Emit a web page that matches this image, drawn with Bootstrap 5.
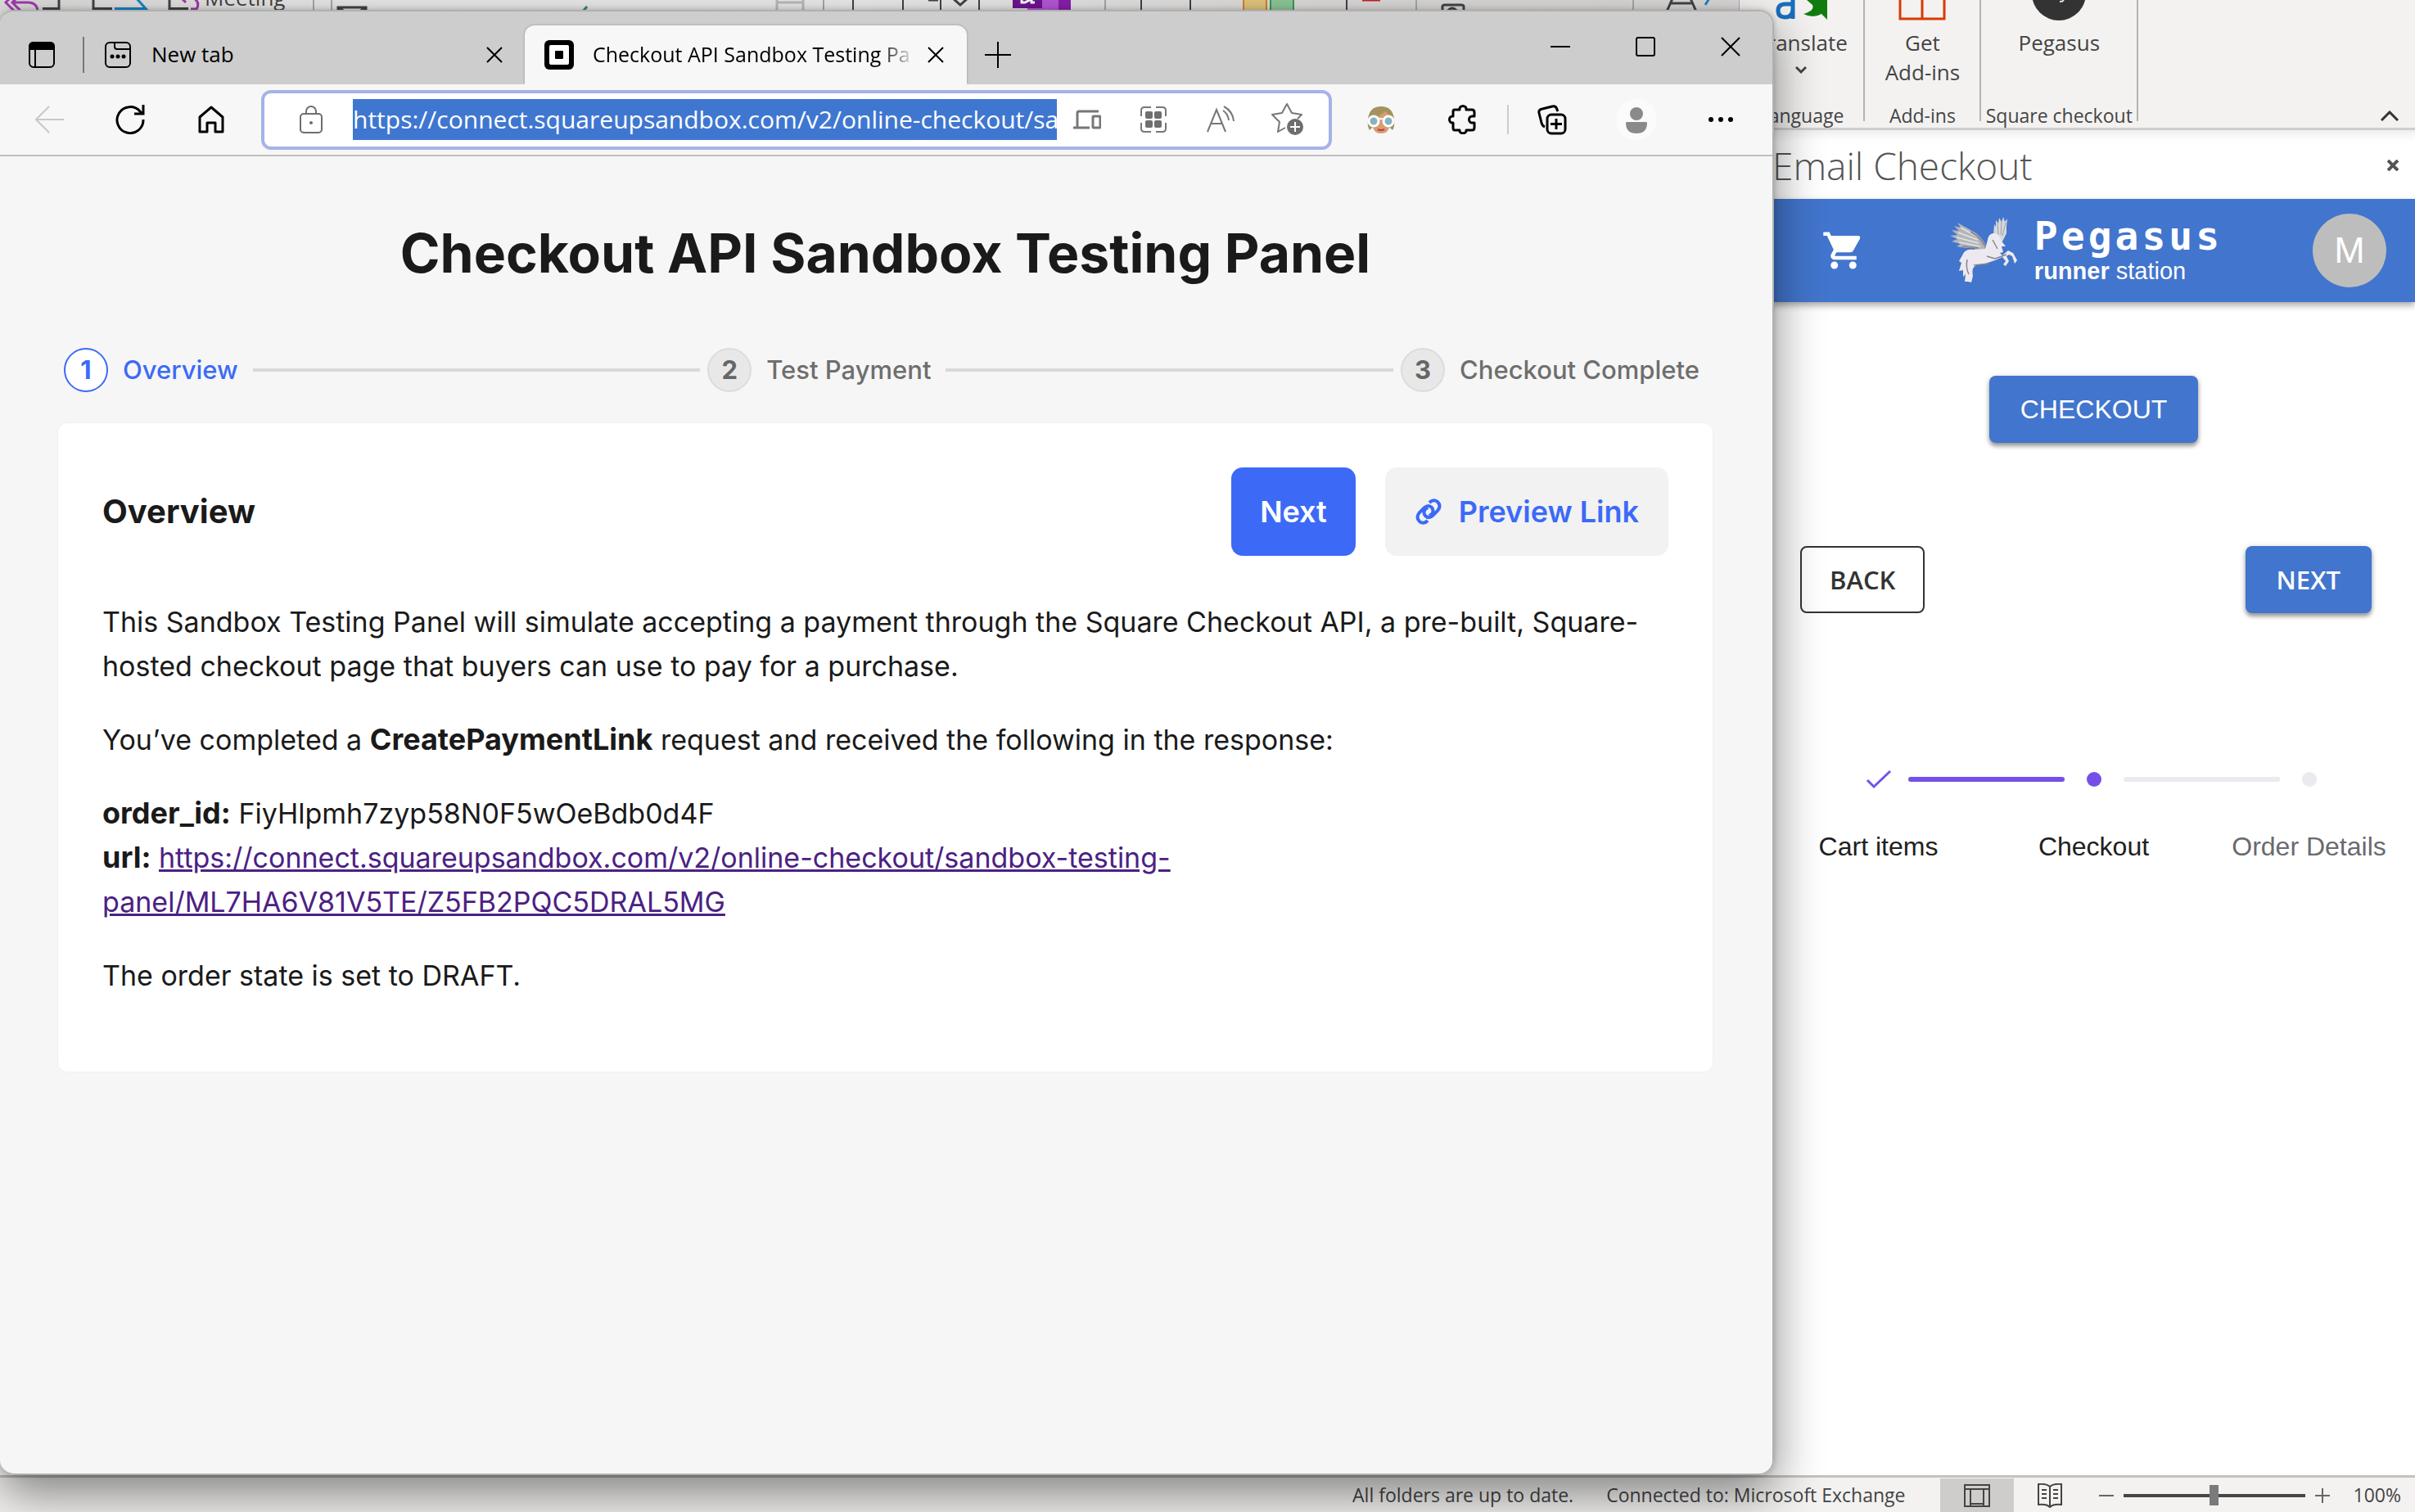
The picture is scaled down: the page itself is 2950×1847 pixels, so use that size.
<!DOCTYPE html>
<html lang="en">
<head>
<meta charset="utf-8">
<meta name="viewport" content="width=device-width, initial-scale=1">
<title>Checkout API Sandbox Testing Panel</title>
<link href="https://cdn.jsdelivr.net/npm/bootstrap@5.3.0/dist/css/bootstrap.min.css" rel="stylesheet">
<style>
  :root { --ui: "Open Sans", "Noto Sans", sans-serif; --arial: "Liberation Sans", Arial, sans-serif; --market: Inter, sans-serif; --pane: 785px; --edge-right: 783px; }
  body { font-family: var(--ui); color: #444; background: #fff; }
  button { padding: 0; border: 0; background: none; color: inherit; }
  svg { display: block; flex: none; }
  .desktop { min-height: 100vh; }

  /* Outlook behind the browser */
  .ribbon { height: 159px; background: #f3f2f1; border-bottom: 3px solid #d0cecc; font-size: 26px; line-height: 36px; }
  .ribbon-left { background: linear-gradient(90deg, #dedddb, #ececec 20%, #eeeeee 50%, #dedcda 80%, #dddbd9); height: 40px; }
  .ribbon-group { height: 148px; border-right: 2px solid #b5b3b1; width: 142px; }
  .ribbon-group.lang { width: 154px; }
  .ribbon-group.square { width: 192px; }
  .ribbon-group .tool { line-height: 36px; padding-top: 34px; position: relative; }
  .tool .glyph { position: absolute; top: 0; left: 50%; transform: translateX(-50%); }
  .tool .caret { margin: 10px auto 0; }
  .ribbon-group .caption { font-size: 23px; line-height: 14px; white-space: nowrap; }
  .ribbon-end { width: 338px; padding: 0 20px 8px 0; }
  .task-pane { width: var(--pane); background: #fff; }
  .pane-title { height: 84px; background: linear-gradient(#efefef, #fff 14px); padding-top: 2px; }
  .pane-title h2 { font: 300 46px/60px var(--ui); color: #555; }
  .app-bar { height: 126px; background: #4275cd; color: #fff; box-shadow: 0 4px 8px rgba(0,0,0,.35); font-family: var(--arial); padding: 0 35px 0 60px; }
  .brand { gap: 18px; padding-right: 8px; }
  .brand-name { font: 700 48px/50px "DejaVu Sans Mono", monospace; letter-spacing: 4px; }
  .brand-sub { font-size: 29px; line-height: 36px; }
  .user-badge { width: 90px; height: 90px; background: #bdbdbd; font-size: 45px; }
  .mui { height: 82px; padding: 0 38px; border-radius: 8px; font: 600 31px/42px var(--ui); background: #4275cd; color: #fff; box-shadow: 0 4px 5px rgba(0,0,0,.35), 0 1px 8px rgba(0,0,0,.15); }
  .mui.arial { font: 400 32px/42px var(--arial); }
  .mui.outline { background: transparent; color: #333; border: 2px solid #333; box-shadow: none; padding: 0 34px; }
  .pay { padding-top: 90px; }
  .pager { padding: 126px 53px 0 34px; }
  .progress-row { padding-top: 191px; }
  .stage { width: 263px; flex: none; gap: 50px; font: 32px/40px var(--arial); color: #202020; }
  .stage svg { height: 24px; }
  .stage.pending { color: #6a6a70; }
  .bar { position: absolute; top: 9px; height: 6px; width: 191px; border-radius: 3px; left: 168px; background: #7450e8; }
  .bar.off { background: #eaeaef; }
  .statusbar { height: 45px; background: #f3f2f1; border-top: 3px solid #c4c2c0; font-size: 23px; padding-top: 1px; }
  .view-on { width: 90px; background: #cfcdcc; }
  .zoom-range { -webkit-appearance: none; appearance: none; width: 222px; height: 26px; margin: 0 12px; background: linear-gradient(#484644,#484644) center/100% 4px no-repeat; }
  .zoom-range::-webkit-slider-thumb { -webkit-appearance: none; width: 11px; height: 25px; background: #7a7a7a; }

  /* browser window */
  .edge { position: absolute; left: 0; top: 12px; right: var(--edge-right); bottom: 45px; border: 2px solid #b0b0b0; border-left: 0; border-radius: 18px; overflow: hidden; background: #f6f6f6; color: #000; }
  .edge-shadow { position: absolute; left: 0; top: 12px; right: var(--edge-right); bottom: 45px; border-radius: 18px; box-shadow: 0 22px 60px rgba(0,0,0,.48), 0 0 6px rgba(0,0,0,.2); }
  .tabstrip { height: 89px; background: #cdcdcd; font-size: 26px; padding: 16px 0 0 35px; }
  .tab-sep { width: 2px; height: 44px; background: #777; margin: 0 25px 0 34px; }
  .tab-off { width: 513px; padding-right: 27px; gap: 25px; }
  .tab-on { width: 540px; height: 72px; background: #f7f7f7; border-radius: 12px 12px 0 0; padding: 0 28px 0 24px; gap: 23px; box-shadow: 0 0 3px rgba(0,0,0,.3); clip-path: inset(-3px -3px 0 -3px); }
  .tab-title { font-size: 25px; width: 391px; overflow: hidden; white-space: nowrap; -webkit-mask: linear-gradient(90deg, #000 350px, transparent 394px); mask: linear-gradient(90deg, #000 350px, transparent 394px); }
  .win-buttons { gap: 80px; padding-right: 39px; margin-top: -19px; }
  .toolbar { height: 88px; background: #f7f7f7; border-bottom: 2px solid #bfbfbf; padding-left: 42px; }
  .omnibox { width: 1308px; height: 73px; border: 4px solid #a4b3e8; border-radius: 12px; background: #fff; color: #6e6e6e; padding: 0 30px 0 43px; }
  .url { width: 860px; height: 50px; border: 0; border-radius: 0; padding: 0; margin: 0 20px 0 37px; background: #3f77d0; color: #fff; font: 30px/50px var(--ui); outline: 0; }
  .tool-sep { width: 2px; height: 36px; background: #ccc; }
  .page { padding: 0 72px 0 70px; font-family: var(--market); color: #1a1a1a; }
  .page h1 { font-size: 66px; line-height: 90px; font-weight: 700; margin: 73px 0 71px; }
  .steps { font-size: 31px; font-weight: 500; color: #6e6e6e; padding: 0 17px 0 8px; }
  .steps .one { gap: 18px; }
  .num { width: 54px; height: 54px; border: 2px solid #dcdcdc; background: #e8e8e8; border-radius: 50%; font-weight: 700; color: #666; }
  .now .num { border-color: #3c6af7; background: #fff; color: #3c6af7; }
  .now { color: #3c6af7; }
  .rule { height: 4px; background: #d6d9dc; margin: 0 9px 0 18px; }
  .panel { margin-top: 37px; background: #fff; border: 1px solid #f1f1f1; border-radius: 12px; padding: 54px 54px 90px; font-size: 34px; line-height: 54px; }
  .panel h2 { font-size: 40px; font-weight: 700; }
  .panel-head { margin-bottom: 54px; }
  .panel p { margin: 0 0 36px; }
  .panel p b { font-size: 36px; line-height: 40px; }
  .panel p a { color: #4b2183; }
  .sq { height: 108px; border-radius: 14px; padding: 0 36px; font-size: 36px; font-weight: 600; background: #f2f2f2; color: #3c6af7; gap: 20px; }
  .sq.main { background: #3c6af7; color: #fff; margin-right: 36px; padding: 0 35px; }
</style>
<script src="https://cdn.jsdelivr.net/npm/bootstrap@5.3.0/dist/js/bootstrap.bundle.min.js"></script>
</head>
<body>
<div class="desktop position-relative d-flex flex-column overflow-hidden">

  <header class="ribbon d-flex">
    <div class="ribbon-left flex-grow-1 overflow-hidden">
      <svg width="2126" height="40" fill="none" stroke="#444" stroke-width="3">
        <path d="M18-8 7 3l11 11M26-8 15 3l11 11M16 3h18q12 0 12 12" stroke="#a03cb0"/>
        <path d="M52 10.500h20V-5M114-5v15.500h23M207-5v15.500h23"/>
        <path d="M140 10.500h38L164-5" stroke="#1a86c8"/>
        <path d="M222-2l5 5M236-3q9 6 4 14h-7" stroke="#a03cb0"/>
        <path d="M383 0v14M405 0v14M1006 0v14M1350 0v14M1730 0v14M1995 0v14M2125 0v14" stroke="#aaa" stroke-width="2"/>
        <path d="M413 14V9h34v5M413 9l8 5M447 9l-8 5"/>
        <path d="M712 14l5-6" stroke="#2f8f4f"/>
        <path d="M949 0v14M981 0v14M949 3h32" stroke="#bdbdbd"/>
        <path d="M1042 0v14M1103 0v14M1149 0v14M1196 0v14M1394 0v14M1454 0v14M1645 0v14" stroke-width="2"/>
        <path d="M1134 0h12M1164-2l9 8 9-8"/>
        <path d="M1255 0h38v14h-38z" fill="#b858d8" stroke="none"/><path d="M1293 0h15v14h-15z" fill="#8a1fb0" stroke="none"/>
        <path d="M1237 0h36v10h-36z" fill="#6f1494" stroke="none"/><path d="M1248 0v3h4l8-4v4h4" stroke="#fff"/>
        <path d="M1519-2h28v18h-28z" fill="#e4c87e" stroke="#d9822b" stroke-width="2"/><path d="M1552-2h28v18h-28z" fill="#8fca9a" stroke="#3a9a56" stroke-width="2"/>
        <path d="M1664 0h22" stroke="#c62020"/>
        <path d="M1762 14V8q0-2 3-2h20q3 0 3 2v6M1768 14q6-8 12 0M2036 14l8-18M2072 14l-8-18M2040 4h28"/>
        <path d="M2088-2l-5 8" stroke="#1a86c8"/>
        <text x="250" y="7" font-size="26" fill="#444" stroke="none">Meeting</text>
      </svg>
    </div>
    <div class="ribbon-group lang d-flex flex-column justify-content-between align-items-center">
      <button class="tool"><svg class="glyph" width="80" height="26"><path d="M30 0v23M30 10q0 11-9 11t-9-8 9-8h9" fill="none" stroke="#1a6fc0" stroke-width="5"/><path d="M47 0h25v24l-7-7q-10 6-22 0 14-4 11-11z" fill="#107c10"/></svg>Translate<svg class="caret" width="14" height="12" fill="none" stroke="#444" stroke-width="3"><path d="M1 2l6 6 6-6"/></svg></button>
      <span class="caption">Language</span>
    </div>
    <div class="ribbon-group d-flex flex-column justify-content-between align-items-center">
      <button class="tool"><svg class="glyph" width="58" height="26" fill="none" stroke="#d83b01" stroke-width="3"><path d="M2-2v25h54V-2M29-2v25"/></svg>Get<br>Add-ins</button>
      <span class="caption">Add-ins</span>
    </div>
    <div class="ribbon-group square d-flex flex-column justify-content-between align-items-center">
      <button class="tool"><svg class="glyph" width="70" height="26"><circle cx="35" cy="-8" r="33" fill="#333"/><path d="M36 2q6 0 4-4" fill="none" stroke="#ddd" stroke-width="2"/></svg>Pegasus</button>
      <span class="caption">Square checkout</span>
    </div>
    <div class="ribbon-end d-flex justify-content-end align-items-end"><button aria-label="Collapse ribbon"><svg width="22" height="13" fill="none" stroke="#333" stroke-width="3"><path d="M1 12 11 2l10 10"/></svg></button></div>
  </header>

  <main class="flex-grow-1 d-flex justify-content-end bg-white">
    <section class="task-pane">
      <div class="pane-title d-flex justify-content-between align-items-center">
        <h2 class="m-0">Email Checkout</h2>
        <button class="me-3 pe-1" aria-label="Close pane"><svg width="14" height="14" stroke="#555" stroke-width="4"><path d="M1 1l12 12M13 1 1 13"/></svg></button>
      </div>
      <div class="app-bar d-flex align-items-center justify-content-between position-relative">
        <button aria-label="Cart"><svg width="54" height="54" viewBox="0 0 24 24" fill="#fff"><path d="M7 18c-1.100 0-2 .9-2 2s.9 2 2 2 2-.9 2-2-.9-2-2-2zM1 2v2h2l3.600 7.600-1.350 2.450C4.500 15.400 5.500 17 7 17h12v-2H7.400l-.2-.25L8.100 13h7.450c.75 0 1.400-.4 1.750-1L20.900 5.500C21.250 4.800 20.750 4 20 4H5.200l-.9-2zm16 16c-1.100 0-2 .9-2 2s.9 2 2 2 2-.9 2-2-.9-2-2-2z"/></svg></button>
        <div class="brand d-flex align-items-center">
          <svg width="86" height="82" viewBox="0 0 86 82">
            <path d="M47 44C46 32 37 21 28 17L10 7l4 6-8-2 6 6-9-1 7 6-9 1 9 4-7 3 11 3-5 3 11 2 12 0-3 4 8 0-1 3z" fill="#b4b6ba"/>
            <path d="M14 13l20 11M11 19l24 9M9 25l27 7M12 31l26 5" stroke="#e4e5e8" stroke-width="1.500"/>
            <path d="M26 18q16 8 21 26M16 36l20 2" stroke="#8b8d92" stroke-width="2" fill="none"/>
            <path d="M54 24 55 9l2 3 0-8 3 4 1-7 3 5 2-6 2 6 3-4-1 9 0 9-5 10-8 4z" fill="#d7d8dc"/>
            <path d="M59 8l1 14M64 5l-1 17M69 7l-4 16" stroke="#9fa1a6"/>
            <path d="M47 28c1-8 8-10 13-6l5 9 4 5-5 0 2 7-4 1 3 3 7-6 6 3 5 9-3 4-3-9-4-2-3 2 3 6-4 6-3-2 3-4-4-5-9 4-12 4-11 2c-5 3-5 7-4 13l-2 8-4-1-4 0 1-9-3 3 0-8-5 1 3-10-3-2 4-7c3-7 8-8 15-7l13-1z" fill="#eceaf0"/>
            <path d="M53 28l6 11M46 48l10 3 14-5M30 59l18-2M22 52q-2 10 2 18" stroke="#8b8389" stroke-width="1.500" fill="none"/>
          </svg>
          <div class="d-flex flex-column">
            <span class="brand-name">Pegasus</span>
            <span class="brand-sub"><b>runner</b> station</span>
          </div>
        </div>
        <div class="user-badge rounded-circle d-flex align-items-center justify-content-center">M</div>
      </div>
      <div class="pay d-flex justify-content-center"><button class="mui arial">CHECKOUT</button></div>
      <div class="pager d-flex justify-content-between"><button class="mui outline">BACK</button><button class="mui">NEXT</button></div>
      <div class="progress-row d-flex justify-content-center text-center">
        <div class="stage position-relative d-flex flex-column align-items-center"><svg width="32" fill="none" stroke="#7450e8" stroke-width="3"><path d="M2 13l8 8L30 2"/></svg><span>Cart items</span><i class="bar"></i></div>
        <div class="stage position-relative d-flex flex-column align-items-center"><svg width="24"><circle cx="12" cy="12" r="9" fill="#7450e8"/></svg><span>Checkout</span><i class="bar off"></i></div>
        <div class="stage pending d-flex flex-column align-items-center"><svg width="24"><circle cx="12" cy="12" r="9" fill="#eaeaef"/></svg><span>Order Details</span></div>
      </div>
    </section>
  </main>

  <footer class="statusbar d-flex justify-content-end align-items-stretch">
    <span class="align-self-center" style="margin-right:40px">All folders are up to date.</span>
    <span class="align-self-center" style="margin-right:42px">Connected to: Microsoft Exchange</span>
    <button class="view-on d-flex align-items-center justify-content-center" aria-label="Normal view"><svg width="32" height="28" fill="none" stroke="#444" stroke-width="2"><path d="M1 1h30v26H1zM1 6h30M8 6v21M24 6v21M8 24h16"/></svg></button>
    <button class="align-self-center" style="margin:0 45px 0 29px" aria-label="Reading view"><svg width="30" height="30" fill="none" stroke="#444" stroke-width="2"><path d="M15 4Q11 0 1 1v25q10-1 14 3 4-4 14-3V1Q19 0 15 4zv24M5 8h6M5 13h6M5 18h6M19 8h6M19 13h6M19 18h6"/></svg></button>
    <button aria-label="Zoom out"><svg width="18" height="18" stroke="#666" stroke-width="2"><path d="M0 9h18"/></svg></button>
    <input class="zoom-range align-self-center" type="range" min="0" max="100" value="50" aria-label="Zoom">
    <button aria-label="Zoom in"><svg width="18" height="18" stroke="#666" stroke-width="2"><path d="M0 9h18M9 0v18"/></svg></button>
    <span class="align-self-center" style="margin:0 17px 0 29px">100%</span>
  </footer>

  <div class="edge-shadow"></div>
  <section class="edge d-flex flex-column">
    <div class="tabstrip d-flex align-items-center">
      <button aria-label="Tab actions"><svg width="32" height="32" fill="none" stroke="#000" stroke-width="2"><rect x="1" y="1" width="30" height="30" rx="5"/><path d="M1 9V6q0-5 5-5h20q5 0 5 5v3z" fill="#000"/><path d="M8 9v22"/></svg></button>
      <span class="tab-sep"></span>
      <div class="tab-off d-flex align-items-center">
        <svg width="32" height="32" fill="none" stroke="#000" stroke-width="2"><rect x="1" y="1" width="30" height="30" rx="5"/><path d="M12 1v5q0 3 3 3h16"/><g fill="#000" stroke="none"><circle cx="9" cy="18" r="2.500"/><circle cx="16" cy="18" r="2.500"/><circle cx="23" cy="18" r="2.500"/></g></svg>
        <span>New tab</span>
        <button class="ms-auto" aria-label="Close tab"><svg width="20" height="20" stroke="#000" stroke-width="2"><path d="M1 1l18 18M19 1 1 19"/></svg></button>
      </div>
      <div class="tab-on d-flex align-items-center align-self-end">
        <svg width="36" height="36"><rect width="36" height="36" rx="6"/><rect x="6" y="6" width="24" height="24" rx="2" fill="#fff"/><rect x="13" y="13" width="10" height="10" rx="1"/></svg>
        <span class="tab-title">Checkout API Sandbox Testing Panel</span>
        <button class="ms-auto" aria-label="Close tab"><svg width="20" height="20" stroke="#000" stroke-width="2"><path d="M1 1l18 18M19 1 1 19"/></svg></button>
      </div>
      <button style="margin-left:22px" aria-label="New tab"><svg width="32" height="32" stroke="#000" stroke-width="2"><path d="M0 16h32M16 0v32"/></svg></button>
      <div class="win-buttons d-flex align-items-center ms-auto">
        <button aria-label="Minimize"><svg width="24" height="24" stroke="#000" stroke-width="2"><path d="M0 12h24"/></svg></button>
        <button aria-label="Maximize"><svg width="24" height="24" fill="none" stroke="#000" stroke-width="2"><rect x="1" y="1" width="22" height="22" rx="2"/></svg></button>
        <button aria-label="Close"><svg width="24" height="24" stroke="#000" stroke-width="2"><path d="M1 1l22 22M23 1 1 23"/></svg></button>
      </div>
    </div>

    <div class="toolbar d-flex align-items-center">
      <button aria-label="Back" style="margin-right:62px"><svg width="37" height="34" fill="none" stroke="#c8c8c8" stroke-width="2"><path d="M36 17H2M18 1 2 17l16 16"/></svg></button>
      <button aria-label="Refresh" style="margin-right:65px"><svg width="36" height="36" fill="none" stroke="#000" stroke-width="3"><path d="M34 18A16 16 0 1 1 30 8l3 3M34 0v11H23"/></svg></button>
      <button aria-label="Home" style="margin-right:45px"><svg width="32" height="34" fill="none" stroke="#000" stroke-width="3" stroke-linejoin="round"><path d="M2 14 16 2l14 12v18h-9V21H11v11H2z"/></svg></button>
      <div class="omnibox d-flex align-items-center">
        <svg width="28" height="34" fill="none" stroke="#6e6e6e" stroke-width="2"><rect x="1" y="10" width="26" height="23" rx="4"/><path d="M8 10V7a6 6 0 0 1 12 0v3"/><circle cx="14" cy="21" r="2" fill="#6e6e6e" stroke="none"/></svg>
        <input class="url" type="text" aria-label="Address" value="https://connect.squareupsandbox.com/v2/online-checkout/sandbox-testing-panel/ML7HA6V81V5TE/Z5FB2PQC5DRAL5MG">
        <button style="margin-right:48px" aria-label="Send to devices"><svg width="34" height="24" fill="none" stroke="#777" stroke-width="3"><path d="M5 21V4q0-2 2-2h24M0 22h20"/><rect x="24" y="8" width="9" height="14" rx="1"/></svg></button>
        <button style="margin-right:49px" aria-label="Apps"><svg width="32" height="32" fill="none" stroke="#777" stroke-width="2"><path d="M1 12V5q0-4 4-4h8M19 1h8q4 0 4 4v7M31 20v7q0 4-4 4h-8M13 31H5q-4 0-4-4v-7"/><g fill="#6e6e6e" stroke="none"><rect x="6" y="6" width="9" height="9" rx="2"/><rect x="17" y="6" width="9" height="9" rx="2"/><rect x="6" y="17" width="9" height="9" rx="2"/><rect x="17" y="17" width="9" height="9" rx="2"/></g></svg></button>
        <button style="margin-right:44px" aria-label="Read aloud"><svg width="35" height="34" fill="none" stroke="#777" stroke-width="2"><path d="M1 32 12 5l11 27M5 22h14M20 6q6 4 7 12M21 1q11 6 12 18"/></svg></button>
        <button aria-label="Add to favorites"><svg width="40" height="40" fill="none" stroke="#777" stroke-width="2" stroke-linejoin="round"><path d="M17 30 8 35l2-12L1 14l12-2 6-11 6 11 12 2-5 5"/><circle cx="29" cy="29" r="10" fill="#6e6e6e" stroke="none"/><path d="M29 23v12M23 29h12" stroke="#fff"/></svg></button>
      </div>
      <button style="margin:0 64px 0 42px" aria-label="Extension"><svg width="36" height="35"><path d="M4 30q-3-4-2-14Q4 1 18 1t16 15q1 10-2 14l-4-4H8z" fill="#a3935f"/><path d="M7 16q9-3 16-9 6 4 6 9v8q-2 10-11 10T7 24z" fill="#d99c70"/><path d="M14 29q4 2 8 0" stroke="#b5443c" stroke-width="2" fill="none"/><path d="M14 17q4-2 8 0" stroke="#fff" stroke-width="2" fill="none"/><g fill="#86b3c4" stroke="#fff" stroke-width="3"><circle cx="9" cy="19" r="6"/><circle cx="27" cy="19" r="6"/></g></svg></button>
      <button style="margin-right:36px" aria-label="Extensions"><svg width="36" height="36" fill="none" stroke="#000" stroke-width="3" stroke-linejoin="round"><path d="M8 6h6c-1-6 9-6 8 0h7q3 0 3 3v5h-2c-6-1-6 9 0 8h2v6q0 3-3 3h-7c1 5-9 5-8 0H8q-2 0-2-3v-6c-6 1-6-9 0-8V8q0-2 2-2z"/></svg></button>
      <span class="tool-sep"></span>
      <button style="margin:0 60px 0 35px" aria-label="Collections"><svg width="36" height="37" fill="none" stroke="#000" stroke-width="3"><path d="M9 27Q6 26 5 22L2 10q-1-4 4-5l12-3q5-1 6 4l1 2"/><rect x="12" y="12" width="22" height="23" rx="5"/><path d="M23 17v13M16 23.500h14"/></svg></button>
      <button style="margin-right:62px" aria-label="Profile"><svg width="50" height="50"><circle cx="25" cy="25" r="25" fill="#fbfbfb"/><circle cx="25" cy="18" r="8" fill="#8a8a8a"/><path d="M12 29q0-1 2-1h22q2 0 2 1 0 13-13 13T12 29z" fill="#8a8a8a"/></svg></button>
      <button aria-label="Settings and more"><svg width="32" height="8"><circle cx="4" cy="4" r="3"/><circle cx="16" cy="4" r="3"/><circle cx="28" cy="4" r="3"/></svg></button>
    </div>

    <div class="page flex-grow-1">
      <h1 class="text-center">Checkout API Sandbox Testing Panel</h1>
      <div class="steps d-flex align-items-center">
        <div class="one now d-flex align-items-center"><span class="num d-flex align-items-center justify-content-center">1</span>Overview</div>
        <div class="rule flex-grow-1"></div>
        <div class="one d-flex align-items-center"><span class="num d-flex align-items-center justify-content-center">2</span>Test Payment</div>
        <div class="rule flex-grow-1"></div>
        <div class="one d-flex align-items-center"><span class="num d-flex align-items-center justify-content-center">3</span>Checkout Complete</div>
      </div>
      <div class="panel">
        <div class="panel-head d-flex align-items-center">
          <h2 class="m-0 me-auto">Overview</h2>
          <button class="sq main">Next</button>
          <button class="sq d-flex align-items-center"><svg width="34" height="34" viewBox="0 0 34 34" fill="none" stroke="#3c6af7" stroke-width="4"><path d="M16 28q-5 5-10 1-5-5 0-11l6-6q5-4 9 0 3 4 0 8l-3 2M18 6q5-5 10-1 5 5 0 11l-6 6q-5 4-9 0-3-4 0-8l3-2"/></svg>Preview Link</button>
        </div>
        <p>This Sandbox Testing Panel will simulate accepting a payment through the Square Checkout API, a pre-built, Square-hosted checkout page that buyers can use to pay for a purchase.</p>
        <p>You’ve completed a <b>CreatePaymentLink</b> request and received the following in the response:</p>
        <p><b>order_id:</b> FiyHlpmh7zyp58N0F5wOeBdb0d4F<br><b>url:</b> <a href="#">https://connect.squareupsandbox.com/v2/online-checkout/sandbox-testing-<br>panel/ML7HA6V81V5TE/Z5FB2PQC5DRAL5MG</a></p>
        <p class="mb-0">The order state is set to DRAFT.</p>
      </div>
    </div>
  </section>
</div>
</body>
</html>
